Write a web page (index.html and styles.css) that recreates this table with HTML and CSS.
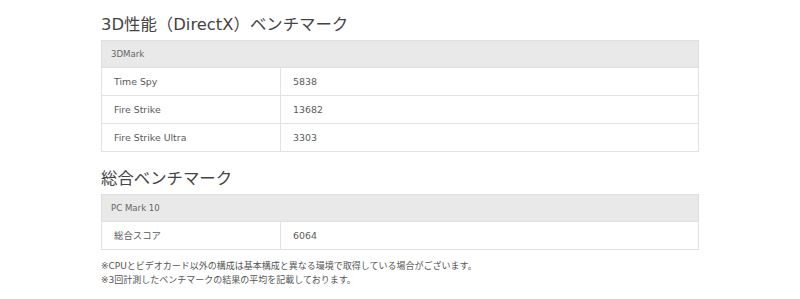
FILE: index.html
```html
<!DOCTYPE html>
<html lang="ja">
<head>
<meta charset="utf-8">
<title>ベンチマーク</title>
<link rel="stylesheet" href="styles.css">
</head>
<body>
<main class="bench">
  <section class="bench-section">
    <h2 class="bench-title">3D性能（DirectX）ベンチマーク</h2>
    <table class="bench-table">
      <thead>
        <tr><th colspan="2">3DMark</th></tr>
      </thead>
      <tbody>
        <tr><td class="name">Time Spy</td><td>5838</td></tr>
        <tr><td class="name">Fire Strike</td><td>13682</td></tr>
        <tr><td class="name">Fire Strike Ultra</td><td>3303</td></tr>
      </tbody>
    </table>
  </section>
  <section class="bench-section">
    <h2 class="bench-title">総合ベンチマーク</h2>
    <table class="bench-table">
      <thead>
        <tr><th colspan="2">PC Mark 10</th></tr>
      </thead>
      <tbody>
        <tr><td class="name">総合スコア</td><td>6064</td></tr>
      </tbody>
    </table>
    <div class="bench-notes">
      <p>※CPUとビデオカード以外の構成は基本構成と異なる環境で取得している場合がございます。</p>
      <p>※3回計測したベンチマークの結果の平均を記載しております。</p>
    </div>
  </section>
</main>
</body>
</html>
```

FILE: styles.css
```css
html, body {
  margin: 0;
  padding: 0;
  background: #fff;
}

body {
  font-family: "DejaVu Sans", "Noto Sans CJK JP", sans-serif;
  color: #555;
}

.bench {
  width: 598px;
  margin: 0 auto;
  padding-top: 14px;
}

.bench-section + .bench-section {
  margin-top: 16px;
}

.bench-title {
  margin: 0 0 4px;
  font-size: 16.4px;
  line-height: 22px;
  font-weight: normal;
  color: #444;
}

.bench-table {
  width: 100%;
  border-collapse: collapse;
  border: 1px solid #dedede;
}

.bench-table th {
  background: #e9e9e9;
  border: 1px solid #dedede;
  text-align: left;
  font-weight: normal;
  font-size: 8.6px;
  line-height: 14px;
  padding: 6px 9px;
  color: #666;
}

.bench-table td {
  border: 1px solid #e2e2e2;
  font-size: 9.4px;
  line-height: 13px;
  padding: 7px 12px;
  color: #5a5a5a;
}

.bench-table td.name {
  width: 30%;
}

.bench-notes {
  margin-top: 9px;
  font-size: 9px;
  line-height: 14px;
  color: #555;
}

.bench-notes p {
  margin: 0;
}
```
